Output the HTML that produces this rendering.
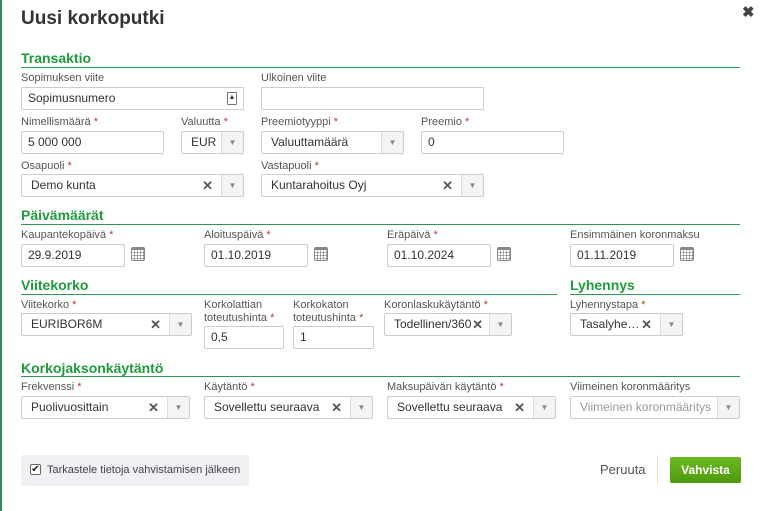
<!DOCTYPE html>
<html><head><meta charset="utf-8"><style>
*{box-sizing:border-box;margin:0;padding:0}
body{width:761px;height:511px;background:#fff;position:relative;overflow:hidden;font-family:"Liberation Sans",sans-serif;color:#333}
.a{position:absolute}
.edge{left:0;top:0;width:2px;height:511px;background:#2e8b57}
h1{position:absolute;left:21px;top:8px;font-size:19px;font-weight:bold;color:#333}
.h{position:absolute;font-size:14px;font-weight:bold;color:#1e9c3c}
.ln{position:absolute;height:1px;background:#2a9a4a}
.l{position:absolute;font-size:11px;color:#555;line-height:13px;white-space:nowrap}
.l b{color:#c0392b;font-weight:normal}
.i{position:absolute;height:23px;border:1px solid #ccc;border-radius:2px;font-size:12px;color:#333;padding:0 6px;line-height:21px;background:#fff;white-space:nowrap;overflow:hidden}
.s{padding-left:9px}
.s .ar{position:absolute;right:0;top:0;width:22px;height:21px;background:#f3f4f6;border-left:1px solid #ddd;color:#888;font-size:8px;text-align:center;line-height:21px}
.s .x{position:absolute;right:30px;top:0;font-size:13px;color:#555;font-weight:bold}
.cal{position:absolute;width:14px;height:14px;border:1px solid #888;border-top-width:3px;border-radius:2px;background:radial-gradient(circle,#777 0.8px,transparent 1px) 1px 1px/3px 3px;}
</style></head><body>
<div class="a edge"></div>
<h1>Uusi korkoputki</h1>
<div class="a" style="left:742px;top:3px;font-size:15px;font-weight:bold;color:#444">✖</div>

<div class="h" style="left:21px;top:50px">Transaktio</div><div class="ln" style="left:21px;top:67px;width:719px"></div>
<div class="l" style="left:21px;top:72px">Sopimuksen viite</div>
<div class="i" style="left:21px;top:87px;width:223px">Sopimusnumero<span class="a" style="right:6px;top:4px;width:10px;height:13px;border:1px solid #777;border-radius:1px;font-size:7px;line-height:10px;text-align:center">▲</span></div>
<div class="l" style="left:261px;top:72px">Ulkoinen viite</div>
<div class="i" style="left:261px;top:87px;width:223px"></div>

<div class="l" style="left:21px;top:116px">Nimellismäärä <b>*</b></div>
<div class="i" style="left:21px;top:131px;width:143px">5 000 000</div>
<div class="l" style="left:181px;top:116px">Valuutta <b>*</b></div>
<div class="i s" style="left:181px;top:131px;width:63px">EUR<span class="ar">▼</span></div>
<div class="l" style="left:261px;top:116px">Preemiotyyppi <b>*</b></div>
<div class="i s" style="left:261px;top:131px;width:143px">Valuuttamäärä<span class="ar">▼</span></div>
<div class="l" style="left:421px;top:116px">Preemio <b>*</b></div>
<div class="i" style="left:421px;top:131px;width:143px">0</div>

<div class="l" style="left:21px;top:160px">Osapuoli <b>*</b></div>
<div class="i s" style="left:21px;top:174px;width:223px">Demo kunta<span class="x">✕</span><span class="ar">▼</span></div>
<div class="l" style="left:261px;top:160px">Vastapuoli <b>*</b></div>
<div class="i s" style="left:261px;top:174px;width:223px">Kuntarahoitus Oyj<span class="x">✕</span><span class="ar">▼</span></div>

<div class="h" style="left:21px;top:207px">Päivämäärät</div><div class="ln" style="left:21px;top:224px;width:719px"></div>
<div class="l" style="left:21px;top:229px">Kaupantekopäivä <b>*</b></div>
<div class="i" style="left:21px;top:244px;width:104px">29.9.2019</div><div class="cal" style="left:131px;top:247px"></div>
<div class="l" style="left:204px;top:229px">Aloituspäivä <b>*</b></div>
<div class="i" style="left:204px;top:244px;width:104px">01.10.2019</div><div class="cal" style="left:314px;top:247px"></div>
<div class="l" style="left:387px;top:229px">Eräpäivä <b>*</b></div>
<div class="i" style="left:387px;top:244px;width:104px">01.10.2024</div><div class="cal" style="left:497px;top:247px"></div>
<div class="l" style="left:570px;top:229px">Ensimmäinen koronmaksu</div>
<div class="i" style="left:570px;top:244px;width:104px">01.11.2019</div><div class="cal" style="left:680px;top:247px"></div>

<div class="h" style="left:21px;top:277px">Viitekorko</div><div class="ln" style="left:21px;top:294px;width:536px"></div>
<div class="h" style="left:570px;top:277px">Lyhennys</div><div class="ln" style="left:570px;top:294px;width:170px"></div>
<div class="l" style="left:21px;top:299px">Viitekorko <b>*</b></div>
<div class="i s" style="left:21px;top:313px;width:171px">EURIBOR6M<span class="x">✕</span><span class="ar">▼</span></div>
<div class="l" style="left:204px;top:299px">Korkolattian<br>toteutushinta <b>*</b></div>
<div class="i" style="left:204px;top:326px;width:80px">0,5</div>
<div class="l" style="left:293px;top:299px">Korkokaton<br>toteutushinta <b>*</b></div>
<div class="i" style="left:293px;top:326px;width:81px">1</div>
<div class="l" style="left:384px;top:299px">Koronlaskukäytäntö <b>*</b></div>
<div class="i s" style="left:384px;top:313px;width:128px;padding-left:9px">Todellinen/360<span class="x" style="right:28px">✕</span><span class="ar">▼</span></div>
<div class="l" style="left:570px;top:299px">Lyhennystapa <b>*</b></div>
<div class="i s" style="left:570px;top:313px;width:113px">Tasalyhe…<span class="x">✕</span><span class="ar">▼</span></div>

<div class="h" style="left:21px;top:360px">Korkojaksonkäytäntö</div><div class="ln" style="left:21px;top:376px;width:719px"></div>
<div class="l" style="left:21px;top:381px">Frekvenssi <b>*</b></div>
<div class="i s" style="left:21px;top:396px;width:169px">Puolivuosittain<span class="x">✕</span><span class="ar">▼</span></div>
<div class="l" style="left:204px;top:381px">Käytäntö <b>*</b></div>
<div class="i s" style="left:204px;top:396px;width:169px">Sovellettu seuraava<span class="x">✕</span><span class="ar">▼</span></div>
<div class="l" style="left:387px;top:381px">Maksupäivän käytäntö <b>*</b></div>
<div class="i s" style="left:387px;top:396px;width:169px">Sovellettu seuraava<span class="x">✕</span><span class="ar">▼</span></div>
<div class="l" style="left:570px;top:381px">Viimeinen koronmääritys</div>
<div class="i s" style="left:570px;top:396px;width:170px;color:#999">Viimeinen koronmääritys<span class="ar">▼</span></div>

<div class="a" style="left:21px;top:455px;width:228px;height:31px;background:#eef0f4;border-radius:2px"></div>
<div class="a" style="left:30px;top:464px;width:11px;height:11px;border:1px solid #666;border-radius:2px;background:#fff;font-size:10px;line-height:9px;text-align:center;color:#222">✔</div>
<div class="l" style="left:47px;top:464px;color:#444">Tarkastele tietoja vahvistamisen jälkeen</div>
<div class="a" style="left:600px;top:462px;font-size:13px;color:#555">Peruuta</div>
<div class="a" style="left:657px;top:456px;width:1px;height:29px;background:#e3e3e3"></div>
<div class="a" style="left:670px;top:457px;width:71px;height:26px;background:linear-gradient(#6cb81e,#4e9a0e);border-radius:2px;color:#fff;font-size:12px;font-weight:bold;text-align:center;line-height:26px">Vahvista</div>
</body></html>
